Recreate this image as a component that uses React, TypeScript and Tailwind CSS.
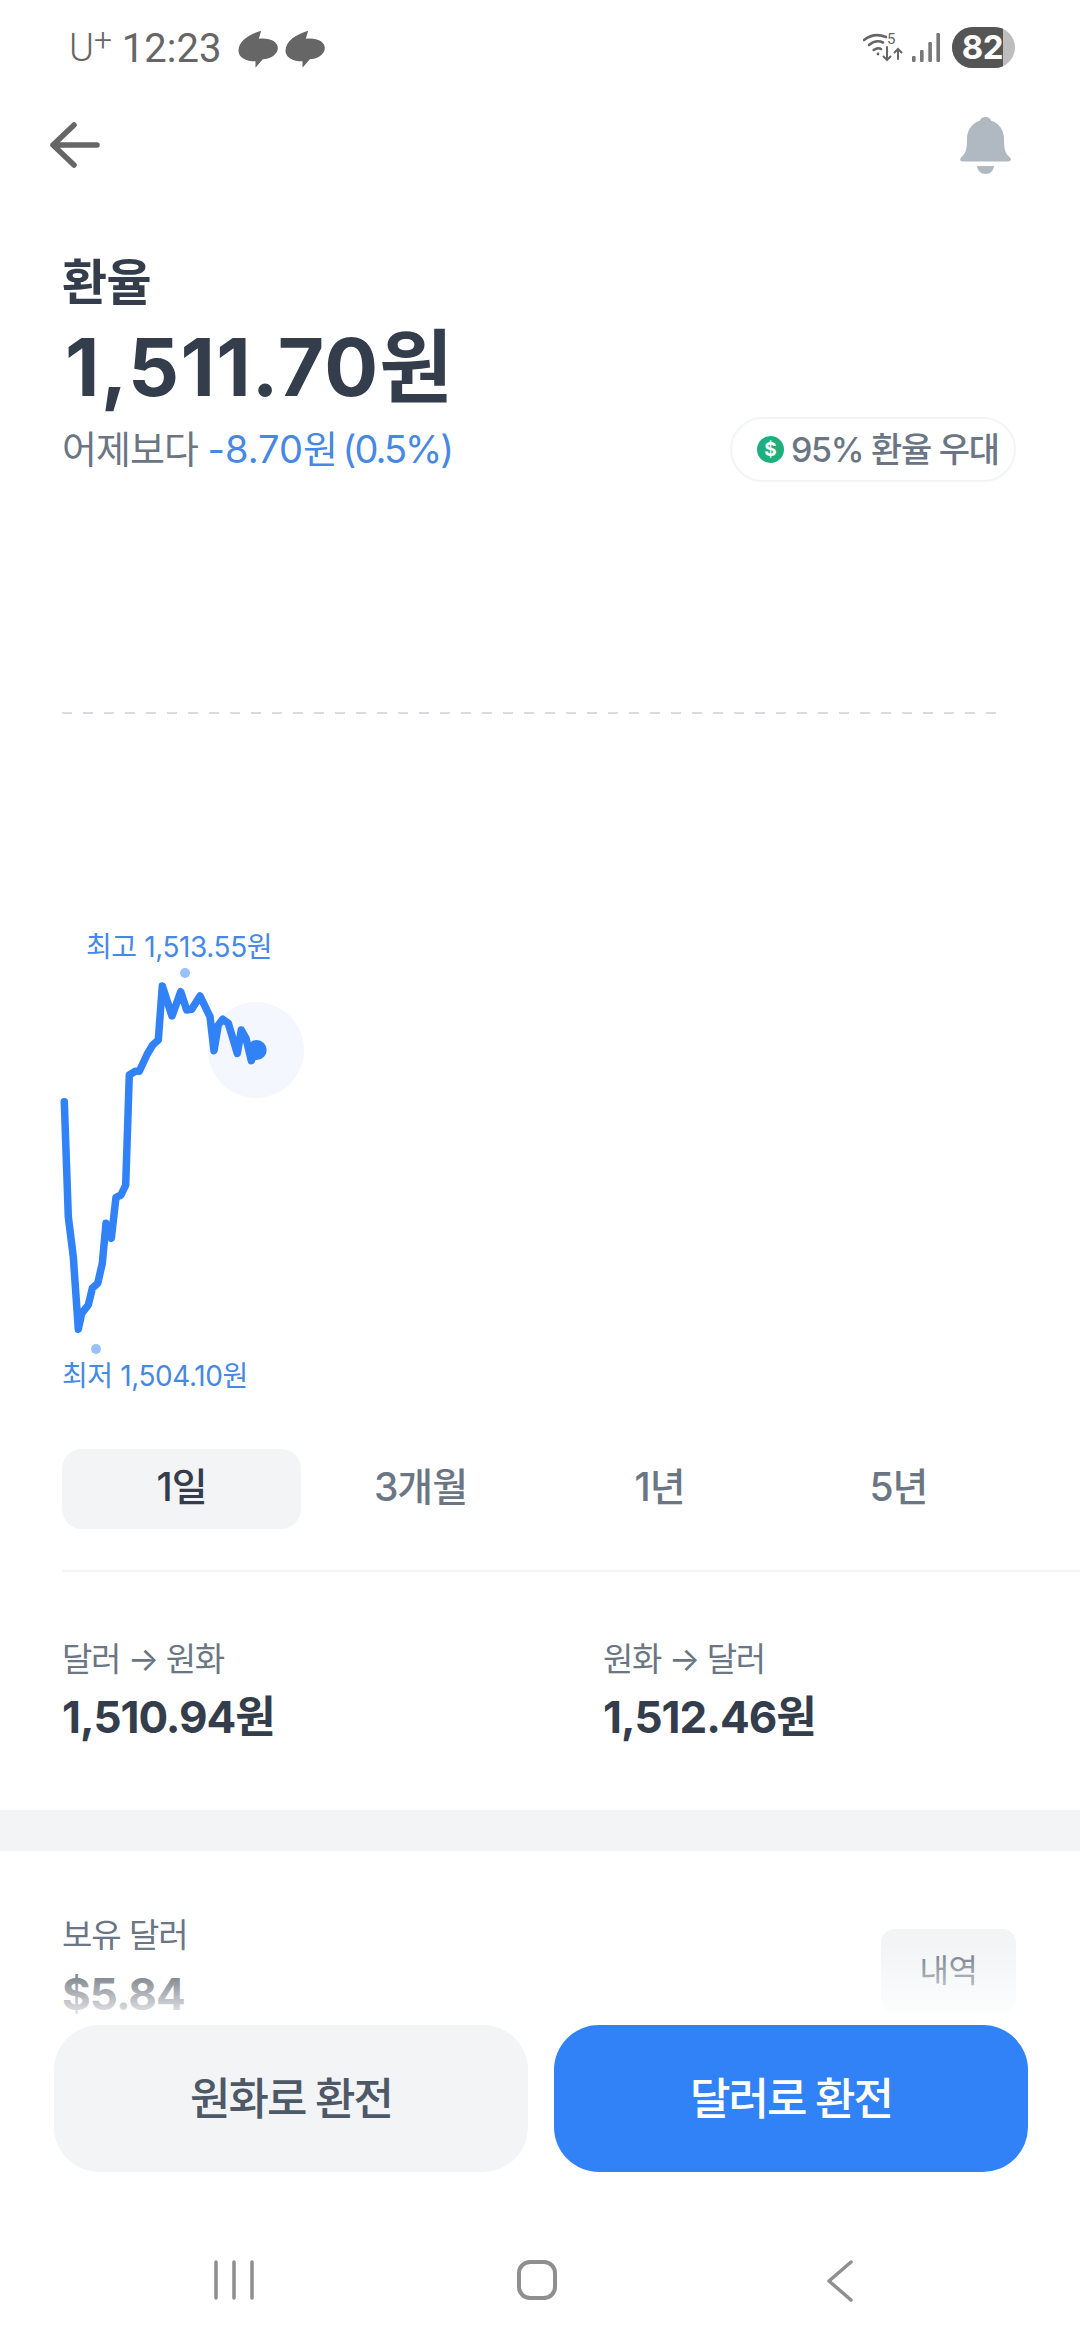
const points =
  "64.3,1101.7 68.3,1216.7 73.3,1256.7 78.3,1329.3 81.7,1313.3 88.3,1305 92.3,1288.3 97.7,1283.3 102.3,1263.3 106,1223.3 111.3,1238.3 116,1197.3 121,1195 125.7,1185 129.3,1075 135,1071.3 139.3,1071.3 147.3,1054 152.7,1045 158.3,1040 162.3,986 172,1016 180.7,991.7 186.7,1010 191.7,1009.3 200,996 210,1016.7 214,1050.7 218.3,1025 222.7,1019.3 228.3,1023.3 237.3,1053.3 241.3,1030 246,1038.3 251.3,1060.7 255,1050";

function Swirl() {
  return (
    <svg viewBox="35 25 125 120" className="w-[42px] h-[40px]">
      <path
        d="M107 30 L100 54 C132 50 157 62 157 82 C157 102 132 116 112 116 L90 141 L90 122 C60 122 39 110 39 90 C39 60 72 40 107 30 Z"
        fill="#666666"
      />
    </svg>
  );
}

function StatusBar() {
  return (
    <div className="flex items-center justify-between h-[41px] mt-[27px] pl-[69px] pr-[65px] text-[#666666] font-['Roboto','Noto_Sans_CJK_KR',sans-serif]">
      <div className="flex items-center">
        <span className="text-[38px] leading-[41px] font-light mr-[12px] relative top-[2px]">
          U<sup className="text-[32px] leading-none absolute top-[-4px] left-[25px]">+</sup>
          <span className="invisible text-[28px]">+</span>
        </span>
        <span className="text-[40px] leading-[41px] relative top-[1px] mr-[16px]">12:23</span>
        <div className="flex gap-[5px] relative top-[1px]">
          <Swirl />
          <Swirl />
        </div>
      </div>
      <div className="flex items-center">
        <div className="relative w-[40px] h-[31px] mr-[9px]">
          <svg viewBox="0 0 40 31" className="w-[40px] h-[31px]" fill="none" stroke="#666666" strokeLinecap="round">
            <path d="M1 8 Q11 0 23 5" strokeWidth="2.6" />
            <path d="M6 13 Q13 7 20 10.5" strokeWidth="2.6" />
            <path d="M10.7 18 Q15 15 18 17" strokeWidth="2.6" />
            <circle cx="15" cy="22" r="1.4" fill="#666666" stroke="none" />
            <path d="M24 15 V28 M20.5 24.5 L24 28 L27.5 24.5" strokeWidth="2" />
            <path d="M35 27 V17 M31.5 20.5 L35 17 L38.5 20.5" strokeWidth="2" />
          </svg>
          <span className="absolute left-[24px] top-0 text-[15px] leading-[14px]">5</span>
        </div>
        <svg viewBox="0 0 28 30" className="w-[28px] h-[30px] mr-[12px]" fill="#777777">
          <rect x="0" y="23" width="3.6" height="6" rx="1.2" />
          <rect x="8" y="17" width="3.6" height="12" rx="1.2" />
          <rect x="16.3" y="9" width="3.6" height="20" rx="1.2" />
          <rect x="24.4" y="0" width="3.6" height="29" rx="1.2" />
        </svg>
        <div className="w-[63px] h-[41px] rounded-full overflow-hidden bg-[#bdbdbd]">
          <div className="w-[51px] h-full bg-[#555555] flex items-center justify-end">
            <span className="text-[33px] leading-none font-bold text-white font-['Inter',sans-serif] tracking-[-0.5px]">82</span>
          </div>
        </div>
      </div>
    </div>
  );
}

function Header() {
  return (
    <div className="flex items-center justify-between h-[154px] pl-[50px] pr-[69px]">
      <svg viewBox="0 0 50 46" className="w-[50px] h-[46px]" fill="none" stroke="#666666" strokeWidth="5.5" strokeLinecap="round" strokeLinejoin="round">
        <path d="M47 23 H3 M24 3 L3 23 L24 43" />
      </svg>
      <svg viewBox="0 0 51 57" className="w-[51px] h-[57px]" fill="#b0b8c1">
        <path d="M25.5 0 C28.5 0 30.5 1.5 31.2 3.8 C39 6.2 44 13 44 22 C44 32 45 36 49.5 40 C52 42.4 50.8 44.5 48 44.5 H3 C0.2 44.5 -1 42.4 1.5 40 C6 36 7 32 7 22 C7 13 12 6.2 19.8 3.8 C20.5 1.5 22.5 0 25.5 0 Z" />
        <path d="M17 49 H34 C33.5 53.8 30 57 25.5 57 C21 57 17.5 53.8 17 49 Z" />
      </svg>
    </div>
  );
}

function Summary() {
  return (
    <div className="mt-[31px] text-[#333d4b]">
      <div className="pl-[62px] text-[49px] leading-[60px] font-bold tracking-[-0.5px]">환율</div>
      <div className="pl-[65px] text-[80px] leading-[96px] font-bold mt-[6px] tracking-[1.2px]">1,511.70원</div>
      <div className="flex items-center justify-between pl-[62px] pr-[64px] h-[65px] mt-[2px]">
        <div className="text-[38px] leading-[65px] text-[#6b7684] tracking-[-1px]">
          어제보다{" "}
          <span className="text-[#4688e4] tracking-[0px]">
            -8.70원 <span className="tracking-[-2px] ml-[-6px]">(0.5%)</span>
          </span>
        </div>
        <div className="flex items-center h-[65px] w-[286px] pl-[25px] border-2 border-[#f2f4f6] rounded-full">
          <div className="w-[27px] h-[27px] rounded-full bg-[#1fae7e] flex items-center justify-center text-white text-[19px] font-bold leading-none mr-[7px] shrink-0">
            $
          </div>
          <span className="text-[34px] leading-none font-medium text-[#6b7684] tracking-[-1.3px] whitespace-nowrap">95% 환율 우대</span>
        </div>
      </div>
    </div>
  );
}

function Chart() {
  return (
    <div className="relative h-[967px]">
      <svg viewBox="0 482 1080 967" className="w-[1080px] h-[967px] block" fill="none">
        <line x1="62" y1="713" x2="998" y2="713" stroke="#d8dce0" strokeWidth="2" strokeDasharray="10 11" />
        <circle cx="256" cy="1050" r="48" fill="#f4f7fd" />
        <polyline points={points} stroke="#3182f6" strokeWidth="7.5" strokeLinecap="round" strokeLinejoin="round" />
        <circle cx="256.7" cy="1050" r="10" fill="#3182f6" />
        <circle cx="185" cy="973" r="5" fill="#3182f6" opacity="0.5" />
        <circle cx="96" cy="1349" r="5" fill="#3182f6" opacity="0.5" />
      </svg>
      <span className="absolute left-[86px] top-[450px] text-[28px] leading-[30px] text-[#4688e4] tracking-[-0.4px] whitespace-nowrap">최고 1,513.55원</span>
      <span className="absolute left-[62px] top-[879px] text-[28px] leading-[30px] text-[#4688e4] tracking-[-0.4px] whitespace-nowrap">최저 1,504.10원</span>
    </div>
  );
}

function Tabs() {
  const tabs = ["1일", "3개월", "1년", "5년"];
  return (
    <div className="grid grid-cols-4 ml-[62px] w-[956px] h-[80px]">
      {tabs.map((t, i) => (
        <div
          key={t}
          className={
            i === 0
              ? "flex items-center justify-center pb-[3px] rounded-[20px] bg-[#f2f4f6] text-[39px] font-medium text-[#333d4b] tracking-[-1px]"
              : "flex items-center justify-center pb-[3px] text-[39px] font-medium text-[#6b7684] tracking-[-1px]"
          }
        >
          {t}
        </div>
      ))}
    </div>
  );
}

function Stats() {
  const items = [
    ["달러 → 원화", "1,510.94원"],
    ["원화 → 달러", "1,512.46원"],
  ];
  return (
    <div className="flex pl-[62px] pt-[63px]">
      {items.map(([label, value]) => (
        <div key={label} className="w-[541px] shrink-0">
          <div className="text-[33px] leading-[48px] text-[#6b7684] tracking-[-1.4px]">{label}</div>
          <div className="text-[44px] leading-[60px] font-bold text-[#333d4b] mt-[4px] tracking-[-1px]">{value}</div>
        </div>
      ))}
    </div>
  );
}

function Holdings() {
  return (
    <div className="flex items-start justify-between pl-[62px] pr-[64px] pt-[60px]">
      <div>
        <div className="text-[33px] leading-[48px] text-[#6b7684] tracking-[-1px]">보유 달러</div>
        <div className="text-[44px] leading-[60px] font-bold text-[#333d4b] mt-[5px] tracking-[-1px]">$5.84</div>
      </div>
      <div className="mt-[18px] w-[135px] h-[84px] rounded-[14px] bg-[#f2f4f6] flex items-center justify-center text-[32px] text-[#6b7684] tracking-[-0.5px]">
        내역
      </div>
    </div>
  );
}

function BottomBar() {
  return (
    <div className="absolute inset-x-0 bottom-0">
      <div className="h-[80px] bg-gradient-to-b from-white/0 to-white" />
      <div className="bg-white">
        <div className="flex gap-[26px] pl-[54px] pr-[52px]">
          <button className="flex-1 h-[147px] rounded-[45px] bg-[#f2f4f6] text-[#4e5968] text-[44px] font-medium tracking-[-2px]">
            원화로 환전
          </button>
          <button className="flex-1 h-[147px] rounded-[45px] bg-[#3182f6] text-white text-[44px] font-medium tracking-[-2px]">
            달러로 환전
          </button>
        </div>
        <div className="flex ml-[82px] pt-[88px] h-[168px]">
          <div className="w-[303px] flex justify-center">
            <svg viewBox="0 0 40 40" className="w-[40px] h-[40px]" stroke="#8f8f8f" strokeWidth="3.5" strokeLinecap="round">
              <path d="M2 2 V38 M20 2 V38 M38 2 V38" />
            </svg>
          </div>
          <div className="w-[303px] flex justify-center">
            <div className="w-[40px] h-[40px] rounded-[13px] border-[4px] border-[#8f8f8f]" />
          </div>
          <div className="w-[303px] flex justify-center">
            <svg viewBox="0 0 28 42" className="w-[28px] h-[42px]" fill="none" stroke="#8f8f8f" strokeWidth="3.5" strokeLinecap="round" strokeLinejoin="round">
              <path d="M25 2 L3 21 L25 40" />
            </svg>
          </div>
        </div>
      </div>
    </div>
  );
}

export default function App() {
  return (
    <div className="relative w-[1080px] h-[2340px] overflow-hidden bg-white font-['Inter','Noto_Sans_CJK_KR',sans-serif]">
      <StatusBar />
      <Header />
      <Summary />
      <Chart />
      <Tabs />
      <div className="ml-[62px] h-[2px] bg-[#f2f4f6] mt-[41px]" />
      <Stats />
      <div className="h-[41px] bg-[#f2f4f6] mt-[63px]" />
      <Holdings />
      <BottomBar />
    </div>
  );
}
